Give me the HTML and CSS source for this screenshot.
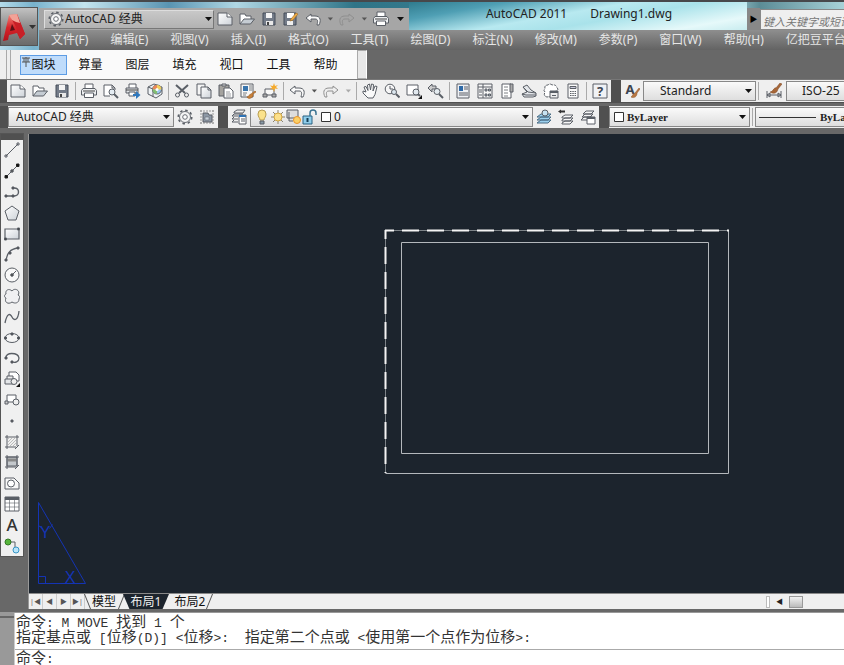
FILE: index.html
```html
<!DOCTYPE html>
<html lang="zh-CN">
<head>
<meta charset="utf-8">
<title>AutoCAD 2011 Drawing1.dwg</title>
<link rel="stylesheet" href="styles.css">
</head>
<body>
<svg class="sprite" aria-hidden="true">
  <defs>
    <linearGradient id="shade" x1="0" y1="0" x2="1" y2="1"><stop offset="0" stop-color="#fff"/><stop offset="1" stop-color="#cdd2d8"/></linearGradient>
    <linearGradient id="red" x1="0" y1="0" x2="0" y2="1"><stop offset="0" stop-color="#f2877c"/><stop offset=".5" stop-color="#d8242a"/><stop offset="1" stop-color="#b3131c"/></linearGradient>
    <symbol id="new" viewBox="0 0 16 16"><path d="M1 2h9l5 4v8H1z" fill="url(#shade)"/><path d="M10 2v4h5" fill="#fff"/></symbol>
    <symbol id="open" viewBox="0 0 16 16"><path d="M1 13V3h5l1 2h5v3" fill="#fff"/><path d="M1 13l4-5h10.500l-4 5z" fill="#c5ccd3"/></symbol>
    <symbol id="save" viewBox="0 0 16 16"><path d="M2 2h12v12H2z" fill="#737b88" stroke="#454c58"/><path d="M5 2h6v5H5z" fill="#f4f4f4" stroke="none"/><path d="M5 10h7v4H5z" fill="#e8e8e8" stroke="none"/><path d="M6 11h2v3H6z" fill="#444" stroke="none"/></symbol>
    <symbol id="saveas" viewBox="0 0 16 16"><path d="M1 2h12v12H1z" fill="#737b88" stroke="#454c58"/><path d="M4 2h7v5H4z" fill="#fff" stroke="none"/><path d="M4 10h6v4H4z" fill="#eee" stroke="none"/><path d="M8 8l5-6 2 1-5 6-3 1z" fill="#efac46" stroke="#a36c22" stroke-width=".6"/></symbol>
    <symbol id="undo" viewBox="0 0 16 16"><path d="M1 7l5-4v2h4c6 0 6 5 4 9h-2c1-4 1-6-2-6H6v3z" fill="#fafafa"/></symbol>
    <symbol id="redo" viewBox="0 0 16 16"><path d="M15 7l-5-4v2H6C0 5 0 10 2 14h2c-1-4-1-6 2-6h4v3z" fill="none" stroke="#8f8f8f"/></symbol>
    <symbol id="print" viewBox="0 0 16 16"><path d="M4 6V1h8v5" fill="#fff"/><path d="M2 5.500h12l1.500 2V12H.5V7.500z" fill="#eceef0"/><path d="M3.500 10h9v4.500h-9z" fill="#fff"/><path d="M2 8h12" stroke="#444"/></symbol>
    <symbol id="preview" viewBox="0 0 16 16"><path d="M7 13H1V2h8l3 3v2M9 2v3h3" fill="#fff"/><circle cx="9" cy="9" r="3" fill="#e5edf3"/><path d="M11 11l4 4" stroke-width="2"/></symbol>
    <symbol id="publish" viewBox="0 0 16 16"><path d="M4 5V1h7v4" fill="#fff"/><path d="M1 5h12v5H1z" fill="#e0e3e6"/><path d="M1 7h12" stroke="#444"/><path d="M4 9h6v4H4z" fill="#fff"/><path d="M8 11h3V8l4.500 4-4.500 4v-3H8z" fill="#2f78bd" stroke="none"/></symbol>
    <symbol id="dwf" viewBox="0 0 16 16"><path d="M1 4l6-3 8 3v7l-6 4-8-4z" fill="#eef2f5"/><path d="M1 4l5 2v8M6 6l4-3"/><circle cx="10" cy="6.500" r="4.500" fill="#9ac7ed"/><path d="M10 2a4.500 4.500 0 0 0-4.500 4.500H10z" fill="#e98858" stroke="none"/><path d="M10 2a4.500 4.500 0 0 1 4.500 4.500H10z" fill="#f3cf5a" stroke="none"/><path d="M5.500 6.500A4.500 4.500 0 0 0 10 11V6.500z" fill="#82bd70" stroke="none"/><circle cx="10" cy="6.500" r="1.500" fill="#fff" stroke="none"/></symbol>
    <symbol id="cut" viewBox="0 0 16 16"><path d="M2 2l9 8M14 2l-9 8" stroke-width="2"/><circle cx="3.500" cy="12" r="2"/><circle cx="12.500" cy="12" r="2"/></symbol>
    <symbol id="copy" viewBox="0 0 16 16"><path d="M1 1h8v11H1z" fill="#f5f5f5"/><path d="M5 4h7l3 3v8H5z" fill="url(#shade)"/><path d="M12 4v3h3"/></symbol>
    <symbol id="paste" viewBox="0 0 16 16"><path d="M1 2h10v11H1z" fill="#a5a39f"/><path d="M4 1h4v2H4z" fill="#ddd"/><path d="M6 5h6l3 3v7H6z" fill="#fff"/><path d="M8 9h4M8 11h5M8 13h5" stroke-width=".6"/></symbol>
    <symbol id="match" viewBox="0 0 16 16"><path d="M1 1h12v13H1z" fill="#f7f7f7"/><path d="M3 3h5v5H3z" fill="#3975ad" stroke="none"/><path d="M9 3h3M9 5h3M9 7h3M3 10h4M3 12h3" stroke-width=".8"/><path d="M15 8l1 1-3 2v2c-2 3-5 3-6 1 2 0 2-3 4-3z" fill="#c8813b" stroke="#9b5a20" stroke-width=".6"/></symbol>
    <symbol id="blockedit" viewBox="0 0 16 16"><path d="M3 6h9v6H3z" fill="#f8f8f8"/><path d="M1 11h4v3H1zM10 11h4v3h-4z" fill="#aaa"/><path d="M12 0l1 3 3-1-2 2 2 2-3-.5L12 9l-1-3-3 .5 2-2-2-2 3 .5z" fill="#f5aa2c" stroke="none"/></symbol>
    <symbol id="hand" viewBox="0 0 16 16"><path d="M6 15L1 10V8l3 1-2-5 2-.5 2 4L5.500 2l2-1 1 6 1-6 2 .5L11 8l2-5 2 .5-2 8-2 3.500z" fill="#fafafa"/></symbol>
    <symbol id="zoomrt" viewBox="0 0 16 16"><circle cx="6" cy="6" r="4.800" fill="#f6f6f6"/><path d="M6 3v3h3"/><circle cx="10" cy="9" r="2.500" fill="#dce7ef"/><path d="M12 11l3.500 3.500" stroke-width="2"/></symbol>
    <symbol id="zoomwin" viewBox="0 0 16 16"><path d="M1 2h11v10H1z" fill="#fff"/><circle cx="10" cy="9" r="3" fill="#e1e8ee"/><path d="M12 11l2 2" stroke-width="2"/><path d="M12 16h4v-4z" fill="#111" stroke="none"/></symbol>
    <symbol id="zoomprev" viewBox="0 0 16 16"><path d="M0 5l4-4v2h4v3H4v3z" fill="#ccc"/><circle cx="9" cy="8.500" r="3" fill="#e5ecf0"/><path d="M11 11l4 4" stroke-width="2"/></symbol>
    <symbol id="props" viewBox="0 0 16 16"><path d="M2 1h12v14H2z" fill="#eef0f4"/><path d="M4 3h4v5H4z" fill="#2d69a7" stroke="none"/><path d="M9 4h4M9 6h4M4 10h9M4 12h9"/></symbol>
    <symbol id="center" viewBox="0 0 16 16"><path d="M1 1h14v14H1zM6 1v14M1 4h14" fill="#f8f8f8"/><path d="M8 6h2v2H8zM11.500 6h2v2h-2zM8 11h2v2H8zM11.500 11h2v2h-2z" fill="#a8b3be"/><path d="M2 7h3M2 9h3M2 12h3"/></symbol>
    <symbol id="palettes" viewBox="0 0 16 16"><path d="M3 1h9v14H3z" fill="#fff"/><path d="M11 1h3v8h-3z" fill="#aaa"/><path d="M5 4h4M5 7h4M5 10h4M5 13h4" stroke-width=".8"/></symbol>
    <symbol id="sheets" viewBox="0 0 16 16"><path d="M2 4l4-2 4 5 5 3v3l-3 1H3l-2-3 5-2z" fill="#e3e6ea"/><path d="M2 4l5 5 8 1M1 11l4 1h10"/></symbol>
    <symbol id="markup" viewBox="0 0 16 16"><path d="M2 9q-2-2 0-3-1-4 3-4 2-2 4 0 4-1 5 3 2 1 0 3l-4 1-1 4-5 1q-4-1-2-5" fill="#fff" stroke-dasharray="3 1"/><path d="M7 8h8v7H7z" fill="#eee"/><path d="M7 9h8" stroke-width="2"/><path d="M9 12.500h4"/></symbol>
    <symbol id="calc" viewBox="0 0 16 16"><path d="M3 1h10v14H3z" fill="#fafafa"/><path d="M5 3.500h6v2H5z" fill="#ccd"/><path d="M5 8.500h6M5 10.500h6M5 12.500h6" stroke-dasharray="1.500 .8"/></symbol>
    <symbol id="help" viewBox="0 0 16 16"><path d="M1 1h14v14H1z" fill="#f0f2f5"/><text x="8" y="13" text-anchor="middle" class="glyph">?</text></symbol>
    <symbol id="textstyle" viewBox="0 0 16 16"><text x="6" y="11" text-anchor="middle" class="glyph">A</text><path d="M15 5l1 1-3 4v1c-1 4-4 4-6 3 2-1 1-3 4-4z" fill="#b97742" stroke="#8b5428" stroke-width=".5"/></symbol>
    <symbol id="dimstyle" viewBox="0 0 16 16"><path d="M1 8v7M15 8v7M1 12h14M1 12l3-2v4zM15 12l-3-2v4z"/><path d="M14 0l2 1-4 5c-1 5-5 5-8 3 3 0 4-5 6-4z" fill="#a76738" stroke="#7b4520" stroke-width=".5"/></symbol>
    <symbol id="gear" viewBox="0 0 16 16"><circle cx="8" cy="8" r="6.800" stroke-width="1.500" stroke-dasharray="2.500 2.840"/><circle cx="8" cy="8" r="5.500" fill="#f4f4f4" stroke-width=".9"/><circle cx="8" cy="8" r="2.300" fill="#fff" stroke-width=".9"/></symbol>
    <symbol id="wsgear" viewBox="0 0 16 16"><path d="M1 2h14M1 14h14M2 1v14M14 1v14" stroke="#999" stroke-dasharray="2 1"/><path d="M4 4h5l1 2h3v7H4z" fill="#8d98a5"/><path d="M6 8h4v3H6z" fill="#c7d1da" stroke-width=".5"/></symbol>
    <symbol id="layers" viewBox="0 0 16 16"><path d="M3 3l3-2h8l-2 3H3zM1 7h6M1 10h6M1 13h6M1 7l2-2h9M1 10l2-2M1 13l2-2" fill="#eee"/><path d="M8 6h7v9H8z" fill="#fff"/><path d="M8 7h7" stroke="#2e72b4" stroke-width="2"/><path d="M10 10h4M10 12h4"/></symbol>
    <symbol id="bulb" viewBox="0 0 16 16"><path d="M6 11C6 9 4 8 4 5a4 4 0 0 1 8 0c0 3-2 4-2 6z" fill="#fbe28b" stroke="#b89d50"/><path d="M6 12h4v3H6z" fill="#8799a5"/></symbol>
    <symbol id="sun" viewBox="0 0 16 16"><path d="M8 1v14M1 8h14M3 3l10 10M13 3L3 13" stroke="#8c8570"/><circle cx="8" cy="8" r="4" fill="#fce08a" stroke="#d3a740"/></symbol>
    <symbol id="vpfreeze" viewBox="0 0 16 16"><path d="M1 1h11v8H1zM3 3v9h4" fill="#ddd"/><circle cx="11" cy="11" r="3.500" fill="#fbd067" stroke="#e9952b"/></symbol>
    <symbol id="lock" viewBox="0 0 16 16"><path d="M1 7h9v8H1z" fill="#8fcdea" stroke="#286283"/><path d="M8 7V4c0-4 6-4 6 0v2" stroke="#3d7491" stroke-width="1.500"/><path d="M5.500 9v4" stroke="#163f56" stroke-width="2"/></symbol>
    <symbol id="swatch" viewBox="0 0 16 16"><path d="M3.500 3.500h9v9h-9z" fill="#fff" stroke="#333"/></symbol>
    <symbol id="laycur" viewBox="0 0 16 16"><path d="M1 8l4-3h10l-3 3zM1 11l4-3h10l-3 3zM1 14l4-3h10l-3 3z" fill="#9bd0ee" stroke="#4a6d85"/><circle cx="9" cy="4" r="3" fill="#c6e2f2"/></symbol>
    <symbol id="layprev" viewBox="0 0 16 16"><path d="M0 2.500l3-2v1h4v2H3v1z" fill="#333" stroke="none"/><path d="M4 8l3-2h8l-3 3H4zM4 11l3-2h8l-3 3H4zM4 14l3-2h8l-3 3H4z" fill="#f7f7f7"/></symbol>
    <symbol id="laystate" viewBox="0 0 16 16"><path d="M3 5l3-3h8l-3 3zM2 8l3-3h8l-3 3zM1 11l3-3h8l-3 3z" fill="#f4f4f4"/><path d="M7 8h8v7H7z" fill="#fff"/><path d="M7 9h8" stroke-width="2"/></symbol>
    <symbol id="line" viewBox="0 0 16 16"><path d="M2 14L14 2"/><path d="M1 13h2v2H1zM13 1h2v2h-2z"/></symbol>
    <symbol id="xline" viewBox="0 0 16 16"><path d="M2 14L14 2"/><path d="M1 12.500h2.500V15H1zM12.500 1H15v2.500h-2.500z" fill="#111" stroke="#222"/><circle cx="8" cy="8" r="1.300" fill="#555"/></symbol>
    <symbol id="pline" viewBox="0 0 16 16"><path d="M1 12h9c6 0 6-8 0-8H8" stroke-width="1.400"/><path d="M1 11h2v2H1zM8 11h2v2H8zM8 3h2v2H8z" fill="#444"/></symbol>
    <symbol id="polygon" viewBox="0 0 16 16"><path d="M8 1l7 5-3 9H4L1 6z" fill="url(#shade)"/></symbol>
    <symbol id="rect" viewBox="0 0 16 16"><path d="M1 3h14v10H1z" fill="url(#shade)" stroke-width="1.200"/><path d="M.5 12h2v2h-2zM13.500 2h2v2h-2z" fill="#333"/></symbol>
    <symbol id="arc" viewBox="0 0 16 16"><path d="M2 15C3 7 6 3 14 2" stroke-width="1.300"/><path d="M1 13h2v2H1zM5 6h2v2H5zM13 1h2v2h-2z" fill="#444"/></symbol>
    <symbol id="circle" viewBox="0 0 16 16"><circle cx="8" cy="8" r="7" fill="#f8f8f8"/><path d="M8 8l4-4"/><circle cx="8" cy="8" r="1.300" fill="#444"/></symbol>
    <symbol id="cloud" viewBox="0 0 16 16"><path d="M8 3c3-4 9 0 6 4 2 1 2 2 1 4 0 4-4 5-7 3-4 3-8 0-6-4C0 9 0 7 2 6c-1-4 3-6 6-3z" fill="#f0f0f2"/></symbol>
    <symbol id="spline" viewBox="0 0 16 16"><path d="M1 14C3 4 6 4 8 8s6 4 7-6" stroke-width="1.300"/></symbol>
    <symbol id="ellipse" viewBox="0 0 16 16"><ellipse cx="8" cy="8" rx="7" ry="4.500" fill="#f4f4f4"/><path d="M.5 7h2v2h-2zM13.500 7h2v2h-2zM7 3h2v2H7z" fill="#444"/></symbol>
    <symbol id="earc" viewBox="0 0 16 16"><path d="M2 8C1 2 14 2 15 8c0 4-4 5-7 4" fill="#f4f4f4" stroke-width="1.300"/><path d="M1 7h2v2H1zM7 11h2v2H7z" fill="#444"/></symbol>
    <symbol id="insert" viewBox="0 0 16 16"><path d="M5 1h7l3 3v6H5z" fill="#fff"/><path d="M3 5h6v5H3z" fill="#eee"/><path d="M1 8h8v5H1z" fill="#e4e6e8"/><circle cx="10" cy="10.500" r="3" fill="#eee"/><path d="M12 16h4v-4z" fill="#111" stroke="none"/></symbol>
    <symbol id="block" viewBox="0 0 16 16"><path d="M3 3h9v7H3z" fill="#fff"/><circle cx="12" cy="10" r="3" fill="#eee"/><path d="M1 9h3v3H1z" fill="#ccc"/></symbol>
    <symbol id="point" viewBox="0 0 16 16"><path d="M7 7h2v2H7z" fill="#555"/></symbol>
    <symbol id="hatch" viewBox="0 0 16 16"><path d="M1 3h14M1 13h11M3 1v14M13 1v11M11 15l4-4"/><path d="M4 5l1-1M4 8l4-4M4 11l7-7M6 12l6-6M9 12l3-3" stroke="#bbb"/></symbol>
    <symbol id="gradient" viewBox="0 0 16 16"><path d="M3 3h10v9H3z" fill="#c4c8cc"/><path d="M1 3h14M1 13h11M3 1v14M13 1v11M11 15l4-4"/><path d="M4 6h8" stroke="#888" stroke-width="3"/></symbol>
    <symbol id="region" viewBox="0 0 16 16"><path d="M1 3h9l5 5v6H1z" fill="#f8f8f8"/><circle cx="7" cy="8.500" r="3.500" fill="#fff"/></symbol>
    <symbol id="table" viewBox="0 0 16 16"><path d="M1 1h14v14H1z" fill="#fff"/><path d="M1 2.500h14" stroke-width="3"/><path d="M1 7h14M1 11h14M5.500 3v12M10.500 3v12" stroke-width=".6"/></symbol>
    <symbol id="mtext" viewBox="0 0 16 16"><text x="8" y="14" text-anchor="middle" class="glyph big">A</text></symbol>
    <symbol id="addsel" viewBox="0 0 16 16"><path d="M5 4h6v5"/><circle cx="4" cy="4" r="3" fill="#57b53c" stroke="#347926"/><circle cx="12" cy="12" r="3" fill="#b8e5fa" stroke="#3795c5"/></symbol>
    <symbol id="pin" viewBox="0 0 10 12"><path d="M1 2h8M5 1v10M1 6h8M3 2v4M7 2v4"/></symbol>
    <symbol id="down" viewBox="0 0 8 8"><path d="M1 2h7L4.500 6z" fill="currentColor" stroke="none"/></symbol>
  </defs>
</svg>

<div class="app">
  <header class="head">
    <button class="appbtn" aria-label="应用程序菜单">
      <svg class="logo" viewBox="0 0 24 30"><path d="M7 3l8-1 8 20-5 5-3-6-8 2-1 5-5 1z" fill="url(#red)"/><path d="M10 12l3 6-5 1z" fill="#5d1116"/><path d="M15 2l8 20-5 5-4-12-5-9z" fill="#c81f27"/><path d="M7 3l8-1 3 9-4-1-4-2z" fill="#f2a297"/></svg>
      <svg class="caret"><use href="#down"/></svg>
    </button>
    <div class="title">
      <div class="quick">
        <div class="field ws-top"><svg class="i"><use href="#gear"/></svg><select aria-label="工作空间"><option>AutoCAD 经典</option></select><svg class="caret"><use href="#down"/></svg></div>
        <button class="t" aria-label="新建"><svg class="i"><use href="#new"/></svg></button>
        <button class="t" aria-label="打开"><svg class="i"><use href="#open"/></svg></button>
        <button class="t" aria-label="保存"><svg class="i"><use href="#save"/></svg></button>
        <button class="t" aria-label="另存为"><svg class="i"><use href="#saveas"/></svg></button>
        <button class="t" aria-label="放弃"><svg class="i"><use href="#undo"/></svg></button>
        <button class="d" aria-label="放弃列表"><svg class="caret small"><use href="#down"/></svg></button>
        <button class="t" aria-label="重做"><svg class="i"><use href="#redo"/></svg></button>
        <button class="d" aria-label="重做列表"><svg class="caret small"><use href="#down"/></svg></button>
        <button class="t" aria-label="打印"><svg class="i"><use href="#print"/></svg></button>
        <button class="d more" aria-label="自定义"><svg class="caret"><use href="#down"/></svg></button>
      </div>
      <div class="caption"><span>AutoCAD 2011</span><span>Drawing1.dwg</span></div>
      <button class="expand" aria-label="展开搜索">▶</button>
      <input class="search" type="text" placeholder="键入关键字或短语" aria-label="搜索">
    </div>
    <nav class="menu">
      <button>文件(F)</button><button>编辑(E)</button><button>视图(V)</button><button>插入(I)</button><button>格式(O)</button><button>工具(T)</button><button>绘图(D)</button><button>标注(N)</button><button>修改(M)</button><button>参数(P)</button><button>窗口(W)</button><button>帮助(H)</button><button>亿把豆平台(Y)</button>
    </nav>
  </header>

  <div class="plugin">
    <span class="grip"></span>
    <nav><button class="on"><svg class="pin"><use href="#pin"/></svg>图块</button><button>算量</button><button>图层</button><button>填充</button><button>视口</button><button>工具</button><button>帮助</button></nav>
    <span class="endcap"></span>
  </div>

  <div class="bar">
    <div class="panel std">
      <button class="t" aria-label="新建"><svg class="i"><use href="#new"/></svg></button>
      <button class="t" aria-label="打开"><svg class="i"><use href="#open"/></svg></button>
      <button class="t" aria-label="保存"><svg class="i"><use href="#save"/></svg></button>
      <i class="sep"></i>
      <button class="t" aria-label="打印"><svg class="i"><use href="#print"/></svg></button>
      <button class="t" aria-label="打印预览"><svg class="i"><use href="#preview"/></svg></button>
      <button class="t" aria-label="发布"><svg class="i"><use href="#publish"/></svg></button>
      <button class="t" aria-label="三维DWF"><svg class="i"><use href="#dwf"/></svg></button>
      <i class="sep"></i>
      <button class="t" aria-label="剪切"><svg class="i"><use href="#cut"/></svg></button>
      <button class="t" aria-label="复制"><svg class="i"><use href="#copy"/></svg></button>
      <button class="t" aria-label="粘贴"><svg class="i"><use href="#paste"/></svg></button>
      <button class="t" aria-label="特性匹配"><svg class="i"><use href="#match"/></svg></button>
      <button class="t" aria-label="块编辑器"><svg class="i"><use href="#blockedit"/></svg></button>
      <i class="sep"></i>
      <button class="t" aria-label="放弃"><svg class="i"><use href="#undo"/></svg></button>
      <button class="d" aria-label="放弃列表"><svg class="caret small"><use href="#down"/></svg></button>
      <button class="t" aria-label="重做"><svg class="i"><use href="#redo"/></svg></button>
      <button class="d dim" aria-label="重做列表"><svg class="caret small"><use href="#down"/></svg></button>
      <i class="sep"></i>
      <button class="t" aria-label="平移"><svg class="i"><use href="#hand"/></svg></button>
      <button class="t" aria-label="实时缩放"><svg class="i"><use href="#zoomrt"/></svg></button>
      <button class="t" aria-label="窗口缩放"><svg class="i"><use href="#zoomwin"/></svg></button>
      <button class="t" aria-label="上一个缩放"><svg class="i"><use href="#zoomprev"/></svg></button>
      <i class="sep"></i>
      <button class="t" aria-label="特性"><svg class="i"><use href="#props"/></svg></button>
      <button class="t" aria-label="设计中心"><svg class="i"><use href="#center"/></svg></button>
      <button class="t" aria-label="工具选项板"><svg class="i"><use href="#palettes"/></svg></button>
      <button class="t" aria-label="图纸集"><svg class="i"><use href="#sheets"/></svg></button>
      <button class="t" aria-label="标记集"><svg class="i"><use href="#markup"/></svg></button>
      <button class="t" aria-label="计算器"><svg class="i"><use href="#calc"/></svg></button>
      <i class="sep"></i>
      <button class="t" aria-label="帮助"><svg class="i"><use href="#help"/></svg></button>
    </div>
    <div class="panel styles">
      <button class="t" aria-label="文字样式"><svg class="i"><use href="#textstyle"/></svg></button>
      <div class="field tstyle"><select aria-label="文字样式列表"><option>Standard</option></select><svg class="caret"><use href="#down"/></svg></div>
      <i class="sep"></i>
      <button class="t wide" aria-label="标注样式"><svg class="i"><use href="#dimstyle"/></svg></button>
      <div class="field dstyle"><select aria-label="标注样式列表"><option>ISO-25</option></select></div>
    </div>
  </div>

  <div class="bar second">
    <div class="panel">
      <div class="field ws"><select aria-label="工作空间列表"><option>AutoCAD 经典</option></select><svg class="caret"><use href="#down"/></svg></div>
      <button class="t" aria-label="工作空间设置"><svg class="i"><use href="#gear"/></svg></button>
      <button class="t" aria-label="我的工作空间"><svg class="i"><use href="#wsgear"/></svg></button>
    </div>
    <div class="panel">
      <button class="t" aria-label="图层特性"><svg class="i"><use href="#layers"/></svg></button>
      <div class="field layer">
        <svg class="i"><use href="#bulb"/></svg><svg class="i"><use href="#sun"/></svg><svg class="i"><use href="#vpfreeze"/></svg><svg class="i"><use href="#lock"/></svg><svg class="i"><use href="#swatch"/></svg>
        <select aria-label="图层"><option>0</option></select><svg class="caret"><use href="#down"/></svg>
      </div>
      <button class="t" aria-label="置为当前"><svg class="i"><use href="#laycur"/></svg></button>
      <button class="t" aria-label="上一个图层"><svg class="i"><use href="#layprev"/></svg></button>
      <button class="t" aria-label="图层状态"><svg class="i"><use href="#laystate"/></svg></button>
    </div>
    <div class="panel">
      <div class="field color"><svg class="i"><use href="#swatch"/></svg><select aria-label="颜色"><option>ByLayer</option></select><svg class="caret"><use href="#down"/></svg></div>
      <i class="sep"></i>
      <div class="field ltype"><span class="rule"></span><select aria-label="线型"><option>ByLayer</option></select></div>
    </div>
  </div>

  <main class="work">
    <aside class="draw">
      <button aria-label="直线"><svg class="i"><use href="#line"/></svg></button>
      <button aria-label="构造线"><svg class="i"><use href="#xline"/></svg></button>
      <button aria-label="多段线"><svg class="i"><use href="#pline"/></svg></button>
      <button aria-label="多边形"><svg class="i"><use href="#polygon"/></svg></button>
      <button aria-label="矩形"><svg class="i"><use href="#rect"/></svg></button>
      <button aria-label="圆弧"><svg class="i"><use href="#arc"/></svg></button>
      <button aria-label="圆"><svg class="i"><use href="#circle"/></svg></button>
      <button aria-label="修订云线"><svg class="i"><use href="#cloud"/></svg></button>
      <button aria-label="样条曲线"><svg class="i"><use href="#spline"/></svg></button>
      <button aria-label="椭圆"><svg class="i"><use href="#ellipse"/></svg></button>
      <button aria-label="椭圆弧"><svg class="i"><use href="#earc"/></svg></button>
      <button aria-label="插入块"><svg class="i"><use href="#insert"/></svg></button>
      <button aria-label="创建块"><svg class="i"><use href="#block"/></svg></button>
      <button aria-label="点"><svg class="i"><use href="#point"/></svg></button>
      <button aria-label="图案填充"><svg class="i"><use href="#hatch"/></svg></button>
      <button aria-label="渐变色"><svg class="i"><use href="#gradient"/></svg></button>
      <button aria-label="面域"><svg class="i"><use href="#region"/></svg></button>
      <button aria-label="表格"><svg class="i"><use href="#table"/></svg></button>
      <button aria-label="多行文字"><svg class="i"><use href="#mtext"/></svg></button>
      <button aria-label="添加选定对象"><svg class="i"><use href="#addsel"/></svg></button>
    </aside>
    <section class="sheet">
      <svg class="canvas">
        <g fill="none" stroke="#b4b8bc">
          <path d="M356.500 339.500h343v-243"/>
          <path d="M372.500 108.500h307v211h-307z"/>
        </g>
        <path d="M356 96.500h344M356.500 96v243" fill="none" stroke="#7d8388"/>
        <path d="M356 96.500h344" fill="none" stroke="#f4f4f4" stroke-width="2" stroke-dasharray="17 8" stroke-dashoffset="8"/>
        <path d="M356.500 96v243" fill="none" stroke="#f4f4f4" stroke-width="2" stroke-dasharray="17 8" stroke-dashoffset="8"/>
        <g class="ucs"><path d="M9.500 368.500v81h47zM9.500 442.500h7v7M9.500 391.500l4 3M20.500 394.500l3-4"/><text x="16" y="404" text-anchor="middle">Y</text><text x="41" y="449" text-anchor="middle">X</text></g>
      </svg>
      <footer class="tabs">
        <div class="nav"><button aria-label="首个">|◀</button><button aria-label="上一个">◀</button><button aria-label="下一个">▶</button><button aria-label="末个">▶|</button></div>
        <button class="tab first">模型</button><button class="tab active">布局1</button><button class="tab last">布局2</button>
        <div class="scroll"><i class="split"></i><button aria-label="向左滚动">◀</button><i class="thumb"></i></div>
      </footer>
    </section>
  </main>

  <section class="cmd">
    <div class="cmdgrip"></div>
    <div class="lines">
      <p>命令<code>: M MOVE </code>找到<code> 1 </code>个</p>
      <p>指定基点或<code> [</code>位移<code>(D)] &lt;</code>位移<code>&gt;:  </code>指定第二个点或<code> &lt;</code>使用第一个点作为位移<code>&gt;:</code></p>
      <label class="prompt"><span>命令<code>:</code></span><input type="text"></label>
    </div>
  </section>
</div>
</body>
</html>
```
FILE: styles.css
```css
* { box-sizing: border-box; }
body, p { margin: 0; }
body { background: #686868; overflow: hidden; font: 12px/16px "Noto Sans", "Noto Sans CJK SC", sans-serif; color: #222; }
button, input, select { font: inherit; color: inherit; background: none; border: 0; padding: 0; margin: 0; }
button { display: flex; align-items: center; justify-content: center; flex: none; white-space: nowrap; }
.sprite { position: absolute; width: 0; height: 0; }
.i { width: 16px; height: 16px; flex: none; fill: none; stroke: #5a5f66; stroke-width: 1; }
.glyph { font: bold 13px "Noto Sans", sans-serif; fill: #3c4450; stroke: none; }
.glyph.big { font-size: 17px; font-weight: 500; fill: #333; }
.caret { width: 8px; height: 8px; flex: none; color: #111; }
.caret.small { width: 6px; height: 6px; color: #555; }
.dim .caret { color: #aaa; }

.app { height: 100vh; display: flex; flex-direction: column; }

.head { flex: none; display: grid; grid-template-columns: 39px 1fr; grid-template-rows: 28px 20px; border-top: 2px solid #47484b; height: 50px;
  background: linear-gradient(90deg, #b5dbea, #78b2cc 4%, #c4e4ee 10%, #5994b2 20%, #b0d7e4 28%, #2f7487 42%, #34798c 50%, #7fc3d0 60%, #b9eaf0 72%, #d5f3f5 84%, #5b8c96 90%, #a8d2d8); }
.appbtn { grid-row: 1 / 3; margin: 5px 1px 4px 0; border: 1px solid #555; background: linear-gradient(#c2c2c2, #8d8d8d 50%, #6a6a6a); gap: 2px; }
.appbtn .caret { color: #333; }
.logo { width: 24px; height: 32px; }
.title { display: flex; align-items: flex-end; min-width: 0; }
.quick { display: flex; align-items: center; height: 22px; padding: 0 2px 0 5px; background: #a6a6a6; flex: none; }
.t { width: 22px; height: 20px; }
.t.wide { width: 25px; }
.d { width: 12px; height: 20px; }
.quick .more { width: 15px; }
.caption { flex: 1; display: flex; justify-content: center; gap: 23px; align-self: stretch; padding: 4px 0 0 2px; white-space: nowrap; background: linear-gradient(170deg, #2f7b8e, #4f9fb4 20%, #b8e9f0 45%, #a9e2ea 60%, #e6f9fa 85%, #c8ecef); }
.expand { width: 13px; height: 22px; background: #888; font-size: 8px; color: #000; }
.search { width: 84px; height: 21px; flex: none; padding: 3px 0 0 2px; background: #efefef; border: 1px solid #888; border-right: 0; font-size: 11px; font-style: italic; }
.search::placeholder { color: #777; opacity: 1; }
.menu { grid-column: 2; display: flex; gap: 22px; padding-left: 12px; overflow: hidden; background: linear-gradient(#8e8e8e, #636363); color: #e6e6e6; }

.field { position: relative; display: flex; align-items: center; height: 20px; border: 1px solid #888; background: linear-gradient(#fafafa, #dedede); padding: 0 3px; flex: none; }
.field select { appearance: none; flex: 1; min-width: 0; height: 16px; line-height: 16px; outline: 0; }
.ws-top { width: 170px; height: 19px; padding: 0 1px 0 3px; background: linear-gradient(#c8c8c8, #b2b2b2); border-color: #ddd #777 #777 #ddd; }
.ws-top select { padding-left: 1px; }

.plugin { flex: none; display: flex; height: 30px; border-bottom: 1px solid #777; }
.plugin nav { display: flex; background: #fafafa; padding: 5px 8px 5px 0; align-items: center; }
.plugin nav button { position: relative; width: 47px; height: 20px; color: #111; }
.plugin nav .on { background: #bfdcfb; border: 1px solid #5d9ce4; }
.pin { position: absolute; left: 0; top: 0; width: 10px; height: 12px; fill: none; stroke: #555; }
.grip { width: 20px; background: linear-gradient(90deg, #eee 6px, #aaa 6px 7px, #eee 7px 10px, #aaa 10px 11px, #eee 11px); }
.endcap { width: 10px; background: #e8e8e8; border: 1px solid #aaa; border-right-color: #fff; }

.bar { flex: none; display: flex; gap: 10px; height: 23px; padding-left: 7px; overflow: hidden; background: #505050; }
.bar.second { margin-top: 3px; height: 22px; padding-left: 8px; }
.panel { display: flex; align-items: center; flex: none; background: #efefef; height: 22px; }
.sep { width: 1px; height: 18px; margin: 0 2px; background: #aaa; flex: none; }
.tstyle { width: 113px; }
.tstyle select { padding-left: 13px; }
.dstyle, .ltype { width: 120px; }
.dstyle select { padding-left: 12px; }
.ws { width: 166px; }
.ws select { padding-left: 4px; }
.layer { width: 283px; }
.layer select { padding-left: 0; }
.color { width: 141px; padding-left: 1px; font: bold 11px "Liberation Serif", serif; }
.ltype { font: bold 11px "Liberation Serif", serif; }
.rule { width: 57px; height: 1px; background: #333; margin-right: 4px; }

.work { flex: 1; min-height: 0; display: flex; padding-top: 6px; }
.draw { width: 22px; margin: 0 5px 53px 1px; padding-top: 6px; background: linear-gradient(#505050 6px, #f0f0f0 6px); display: flex; flex-direction: column; outline: 1px solid #555; }
.draw button { flex: 1; min-height: 0; }
.sheet { flex: 1; min-width: 0; display: flex; flex-direction: column; border-left: 1px solid #999; }
.canvas { flex: 1; min-height: 0; width: 100%; background: #1c242d; }
.ucs { fill: none; stroke: #1434b4; }
.ucs text { font: 16px "Liberation Sans", sans-serif; fill: #1434b4; stroke: none; }

.tabs { flex: none; height: 16px; display: flex; background: #efefef; border-top: 1px solid #888; }
.nav { display: flex; width: 56px; }
.nav button { width: 14px; font-size: 7px; color: #555; border-right: 1px solid #ccc; }
.tab { position: relative; height: 15px; color: #111; }
.tab.first { width: 38px; }
.tab.active { width: 46px; color: #eee; background: #1c242d; clip-path: polygon(0 0, 100% 0, 86% 100%, 14% 100%); }
.tab.last { width: 42px; }
.tab.first::before, .tab.first::after, .tab.last::after { content: ""; position: absolute; top: 0; left: 2px; width: 1px; height: 15px; background: #555; transform: skewX(22deg); }
.tab.first::after, .tab.last::after { left: auto; right: 1px; transform: skewX(-22deg); }
.scroll { margin-left: auto; width: 78px; display: flex; align-items: center; }
.scroll button { width: 19px; font-size: 7px; color: #222; }
.split { width: 4px; height: 12px; background: #fff; border: 1px solid #bbb; }
.thumb { width: 14px; height: 12px; border: 1px solid #999; background: linear-gradient(#f2f2f2, #bbb); }

.cmd { flex: none; margin-top: 3px; height: 53px; display: flex; background: #fff; border-top: 1px solid #999; }
.cmdgrip { width: 15px; background: linear-gradient(#999 3px, #666 3px 5px, #999 5px); border-right: 1px solid #ccc; }
.lines { flex: 1; min-width: 0; font: 15px/15px "Noto Sans CJK SC", sans-serif; color: #333; }
.lines p { padding-left: 1px; height: 15px; white-space: pre; }
.lines code { font: 13px/13px "Liberation Mono", monospace; }
.prompt { display: flex; height: 16px; margin-top: 6px; padding-left: 1px; border-top: 1px solid #aaa; line-height: 13px; }
.prompt input { flex: 1; height: 13px; outline: 0; }
```
